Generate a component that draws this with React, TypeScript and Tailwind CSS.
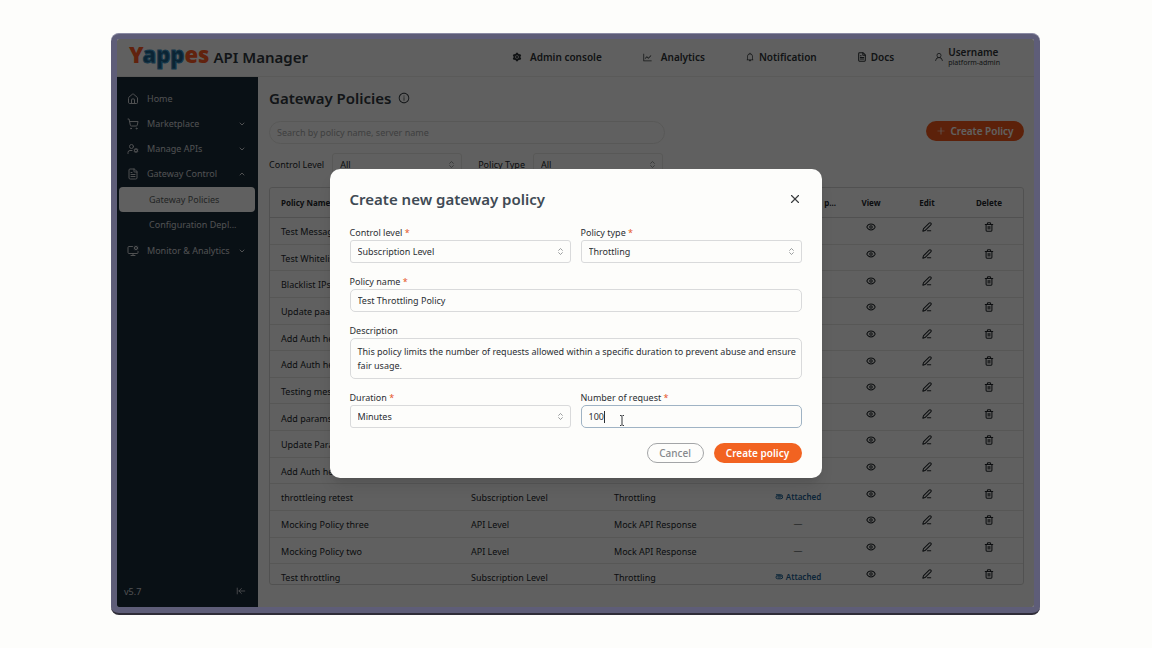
import { useState } from "react";
import type { ComponentType, ReactNode } from "react";
import {
  ArrowLeftToLine,
  ChevronDown,
  ChevronUp,
  ChevronsUpDown,
  Eye,
  FileText,
  House,
  MonitorCog,
  PenLine,
  ShoppingCart,
  Trash2,
  UserCog,
  X,
} from "lucide-react";
import {
  AiFillSetting,
  AiOutlineBell,
  AiOutlineInfoCircle,
  AiOutlineLineChart,
  AiOutlinePlus,
  AiOutlineUser,
} from "react-icons/ai";
import { clsx } from "clsx";

interface Policy {
  name: string;
  level: string;
  type: string;
  attached?: boolean;
}

const policies: Policy[] = [
  { name: "Test Message", level: "API Level", type: "Mock API Response" },
  { name: "Test Whitelist IPs", level: "API Level", type: "IP Whitelist" },
  { name: "Blacklist IPs", level: "API Level", type: "IP Blacklist" },
  { name: "Update paams", level: "API Level", type: "Parameters" },
  { name: "Add Auth header", level: "API Level", type: "Headers" },
  { name: "Add Auth header two", level: "API Level", type: "Headers" },
  { name: "Testing message", level: "API Level", type: "Mock API Response" },
  { name: "Add params", level: "API Level", type: "Parameters" },
  { name: "Update Params", level: "API Level", type: "Parameters" },
  { name: "Add Auth header three", level: "API Level", type: "Headers" },
  { name: "throttleing retest", level: "Subscription Level", type: "Throttling", attached: true },
  { name: "Mocking Policy three", level: "API Level", type: "Mock API Response" },
  { name: "Mocking Policy two", level: "API Level", type: "Mock API Response" },
  { name: "Test throttling", level: "Subscription Level", type: "Throttling", attached: true },
];

const fieldClass =
  "w-full border border-[#d9dadb] bg-transparent px-[7px] text-[9px] text-[#2b2f33] outline-none";

function Logo() {
  return (
    <span className="pb-[6px] text-[22px] leading-none font-black text-[#ff5a26]">
      Y
      <span className="text-[#1f5f86] [-webkit-text-stroke:1px_#3b93c6]">app</span>
      es
    </span>
  );
}

function ClipIcon() {
  return (
    <svg viewBox="0 0 16 12" className="h-[6px] w-2" fill="none" stroke="currentColor" strokeWidth="2">
      <path d="M5 6h6.5a1.2 1.2 0 0 0 0-2.5H5a2.8 2.8 0 0 0 0 6h6.5a4 4 0 0 0 0-8H2" />
    </svg>
  );
}

function TopBar() {
  const linkClass = "flex items-center text-[10px] font-semibold text-[#2f3438]";
  return (
    <header className="flex h-[38px] shrink-0 items-center border-b border-[#ececeb] bg-[#fdfdfb] pr-[34px] pb-px pl-3">
      <Logo />
      <span className="ml-1 text-[15px] font-semibold text-[#31383f]">API Manager</span>
      <nav className="ml-auto flex items-center gap-10">
        <a href="#admin" className={clsx(linkClass, "gap-2")}>
          <AiFillSetting className="size-[10px]" />
          Admin console
        </a>
        <a href="#analytics" className={clsx(linkClass, "gap-2")}>
          <AiOutlineLineChart className="size-[11px]" />
          Analytics
        </a>
        <a href="#notification" className={clsx(linkClass, "gap-1")}>
          <AiOutlineBell className="size-[10px]" />
          Notification
        </a>
        <a href="#docs" className={clsx(linkClass, "gap-1")}>
          <FileText className="size-[10px]" strokeWidth={2.5} />
          Docs
        </a>
        <a href="#account" className={clsx(linkClass, "gap-1")}>
          <AiOutlineUser className="size-[10px]" />
          <span className="flex flex-col">
            <span className="leading-3">Username</span>
            <span className="text-[7px] leading-[10px] font-normal">platform-admin</span>
          </span>
        </a>
      </nav>
    </header>
  );
}

interface SideItemProps {
  icon: ComponentType<{ className?: string; strokeWidth?: number }>;
  label: string;
  expanded?: boolean;
}

function SideItem({ icon: Icon, label, expanded }: SideItemProps) {
  const Chevron = expanded ? ChevronUp : ChevronDown;
  return (
    <a href="#menu" className="flex h-[25px] items-center pr-3 pl-[10px]">
      <Icon className="mr-2 size-3" strokeWidth={2} />
      {label}
      {expanded !== undefined && <Chevron className="ml-auto size-2" strokeWidth={3} />}
    </a>
  );
}

function Sidebar() {
  return (
    <aside className="flex w-[141px] shrink-0 flex-col bg-[#1a2a39] pt-[9px] text-[9px] text-[#cfd3d6]">
      <SideItem icon={House} label="Home" />
      <SideItem icon={ShoppingCart} label="Marketplace" expanded={false} />
      <SideItem icon={UserCog} label="Manage APIs" expanded={false} />
      <SideItem icon={FileText} label="Gateway Control" expanded />
      <div className="my-px flex flex-col pr-[3px] pl-[2px]">
        <a
          href="#policies"
          className="flex h-[25px] items-center rounded-[4px] bg-[#fdfdfb] pl-[30px] text-[#5b5f63]"
        >
          Gateway Policies
        </a>
        <a href="#deployments" className="flex h-[25px] items-center pl-[30px]">
          Configuration Depl...
        </a>
      </div>
      <SideItem icon={MonitorCog} label="Monitor & Analytics" expanded={false} />
      <div className="mt-auto flex items-center justify-between pr-3 pb-[9px] pl-[7px]">
        v5.7
        <button type="button" aria-label="Collapse sidebar">
          <ArrowLeftToLine className="size-[10px]" />
        </button>
      </div>
    </aside>
  );
}

function FilterSelect({ id, label }: { id: string; label: string }) {
  return (
    <div className="flex items-center gap-2">
      <label htmlFor={id}>{label}</label>
      <div className="relative w-[130px]">
        <select
          id={id}
          className="h-[23px] w-full appearance-none rounded-[3px] border border-[#e6e6e5] px-[7px] outline-none"
        >
          <option>All</option>
        </select>
        <ChevronsUpDown className="pointer-events-none absolute top-[7px] right-[6px] size-[9px] text-[#7a7d80]" />
      </div>
    </div>
  );
}

function PolicyTable() {
  const headClass = "border-b border-[#d6d6d5] p-0 text-[8px] font-bold";
  return (
    <div className="mt-[11px] min-h-0 flex-1 overflow-hidden rounded-[3px] border border-[#d6d6d5]">
      <table className="h-[403px] w-full table-fixed border-separate border-spacing-0 text-[9px]">
        <colgroup>
          <col className="w-[190px]" />
          <col className="w-[143px]" />
          <col className="w-[150px]" />
          <col className="w-[90px]" />
          <col className="w-[56px]" />
          <col className="w-[56px]" />
          <col />
        </colgroup>
        <thead>
          <tr className="h-[30px]">
            <th className={clsx(headClass, "pl-[11px] text-left")}>Policy Name</th>
            <th className={clsx(headClass, "pl-[11px] text-left")}>Control Level</th>
            <th className={clsx(headClass, "pl-[11px] text-left")}>Policy Type</th>
            <th className={clsx(headClass, "pr-[7px] text-right")}>Attached p...</th>
            <th className={headClass}>View</th>
            <th className={headClass}>Edit</th>
            <th className={headClass}>Delete</th>
          </tr>
        </thead>
        <tbody className="[&_td]:border-b [&_td]:border-[#e4e4e3]">
          {policies.map((policy) => (
            <tr key={policy.name}>
              <td className="pt-[2px] pb-0 pl-[11px]">{policy.name}</td>
              <td className="pt-[2px] pb-0 pl-[11px]">{policy.level}</td>
              <td className="pt-[2px] pb-0 pl-[11px]">{policy.type}</td>
              <td className="p-0 text-center">
                {policy.attached ? (
                  <span className="flex items-center justify-center gap-[3px] text-[8px] font-semibold text-[#1d6296]">
                    <ClipIcon />
                    Attached
                  </span>
                ) : (
                  "—"
                )}
              </td>
              <RowAction label="View">
                <Eye className="size-[10px]" strokeWidth={2.5} />
              </RowAction>
              <RowAction label="Edit">
                <PenLine className="size-[10px]" strokeWidth={2.5} />
              </RowAction>
              <RowAction label="Delete">
                <Trash2 className="size-[10px]" strokeWidth={2.5} />
              </RowAction>
            </tr>
          ))}
        </tbody>
      </table>
    </div>
  );
}

function RowAction({ label, children }: { label: string; children: ReactNode }) {
  return (
    <td className="px-0 pt-0 pb-[7px]">
      <button type="button" aria-label={label} className="mx-auto block">
        {children}
      </button>
    </td>
  );
}

function Field({
  id,
  label,
  required,
  children,
}: {
  id: string;
  label: string;
  required?: boolean;
  children: ReactNode;
}) {
  return (
    <div className="flex flex-1 flex-col">
      <label htmlFor={id} className="h-[14px] text-[9px] leading-[14px] text-[#2b2f33]">
        {label} {required && <span className="text-[#e5562a]">*</span>}
      </label>
      {children}
    </div>
  );
}

function ModalSelect({ id, options }: { id: string; options: string[] }) {
  return (
    <div className="relative">
      <select id={id} className={clsx(fieldClass, "block h-[23px] appearance-none rounded-[3px]")}>
        {options.map((option) => (
          <option key={option}>{option}</option>
        ))}
      </select>
      <ChevronsUpDown className="pointer-events-none absolute top-[7px] right-[6px] size-[9px] text-[#7a7d80]" />
    </div>
  );
}

function CreatePolicyModal({ onClose }: { onClose: () => void }) {
  return (
    <div
      role="dialog"
      aria-label="Create new gateway policy"
      className="w-[492px] rounded-[10px] bg-[#fdfdfb] px-5 pt-[19px] pb-[15px] shadow-lg"
    >
      <div className="mb-4 flex h-[22px] items-center justify-between">
        <h2 className="text-[15px] font-semibold text-[#3f4a54]">Create new gateway policy</h2>
        <button type="button" aria-label="Close" onClick={onClose}>
          <X className="size-[14px] text-[#3a3d40]" />
        </button>
      </div>
      <form className="flex flex-col gap-3" onSubmit={(e) => e.preventDefault()}>
        <div className="flex gap-[10px]">
          <Field id="level" label="Control level" required>
            <ModalSelect id="level" options={["Subscription Level", "API Level"]} />
          </Field>
          <Field id="type" label="Policy type" required>
            <ModalSelect id="type" options={["Throttling", "Mock API Response"]} />
          </Field>
        </div>
        <Field id="name" label="Policy name" required>
          <input
            id="name"
            defaultValue="Test Throttling Policy"
            className={clsx(fieldClass, "h-[23px] rounded-[5px]")}
          />
        </Field>
        <Field id="description" label="Description">
          <textarea
            id="description"
            defaultValue="This policy limits the number of requests allowed within a specific duration to prevent abuse and ensure fair usage."
            className="h-[41px] w-full resize-none rounded-[5px] border border-[#d9dadb] py-[6px] pr-0 pl-[7px] text-[9px] leading-[14px] text-[#2b2f33] outline-none"
          />
        </Field>
        <div className="flex gap-[10px]">
          <Field id="duration" label="Duration" required>
            <ModalSelect id="duration" options={["Minutes", "Hours"]} />
          </Field>
          <Field id="requests" label="Number of request" required>
            <div className="relative">
              <input
                id="requests"
                defaultValue="100"
                className="block h-[23px] w-full rounded-[5px] border border-[#9fb3c4] px-[7px] text-[9px] text-[#2b2f33] outline-none"
              />
              {/* caret and mouse pointer */}
              <span className="absolute top-[6px] left-[23px] h-3 w-px bg-[#2b2f33]" />
              <svg
                viewBox="0 0 6 11"
                className="absolute top-[10px] left-[38px] h-[11px] w-[6px]"
                fill="none"
                stroke="#33363a"
              >
                <path d="M1 .5h1.200L3 1.300l.8-.8H5M3 1.300v8.400M1 10.500h1.200l.8-.8.8.8H5" />
              </svg>
            </div>
          </Field>
        </div>
        <div className="mt-[3px] flex justify-end gap-[10px]">
          <button
            type="button"
            onClick={onClose}
            className="h-5 w-[57px] rounded-full border border-[#a3a5a7] text-[10px] font-medium text-[#85888b]"
          >
            Cancel
          </button>
          <button
            type="submit"
            className="h-5 w-[88px] rounded-full bg-[#f26321] text-[10px] font-semibold text-white"
          >
            Create policy
          </button>
        </div>
      </form>
    </div>
  );
}

export default function App() {
  const [modalOpen, setModalOpen] = useState(true);

  return (
    <div className="flex h-screen bg-[#fdfdfb] py-[33px] pr-[112px] pl-[111px] font-['Noto_Sans',sans-serif]">
      <div className="relative flex flex-1 flex-col overflow-hidden rounded-[8px] border-t border-b-2 border-t-[#8a8aa3] border-b-[#2f2d38] bg-[#5e5d78] px-[6px] pt-[5px] pb-[6px]">
        <div className="relative flex min-h-0 flex-1 flex-col overflow-hidden rounded-[2px]">
          <TopBar />
          <div className="flex min-h-0 flex-1 bg-[#fdfdfb] text-[#22272c]">
            <Sidebar />
            <main className="flex min-w-0 flex-1 flex-col pt-[11px] pr-[10px] pb-[22px] pl-[11px] text-[9px]">
              <h1 className="flex h-5 items-center gap-[6px] text-[15px] font-semibold text-[#31383f]">
                Gateway Policies
                <AiOutlineInfoCircle className="size-3" />
              </h1>
              <div className="mt-[13px] flex items-start justify-between">
                <input
                  type="search"
                  aria-label="Search policies"
                  placeholder="Search by policy name, server name"
                  className="h-[23px] w-[396px] rounded-full border border-[#e6e6e5] px-[7px] outline-none placeholder:text-[#a5a7a9]"
                />
                <button
                  type="button"
                  onClick={() => setModalOpen(true)}
                  className="flex h-5 w-[98px] items-center justify-center gap-1 rounded-full bg-[#f2581c] text-[10px] font-semibold text-white"
                >
                  <AiOutlinePlus className="size-[10px]" />
                  Create Policy
                </button>
              </div>
              <div className="mt-[9px] flex gap-4">
                <FilterSelect id="filter-level" label="Control Level" />
                <FilterSelect id="filter-type" label="Policy Type" />
              </div>
              <PolicyTable />
            </main>
          </div>
          {modalOpen && <div className="absolute inset-0 bg-black/62" />}
        </div>
        {modalOpen && (
          <div className="absolute inset-0 flex items-center justify-center">
            <CreatePolicyModal onClose={() => setModalOpen(false)} />
          </div>
        )}
      </div>
    </div>
  );
}
